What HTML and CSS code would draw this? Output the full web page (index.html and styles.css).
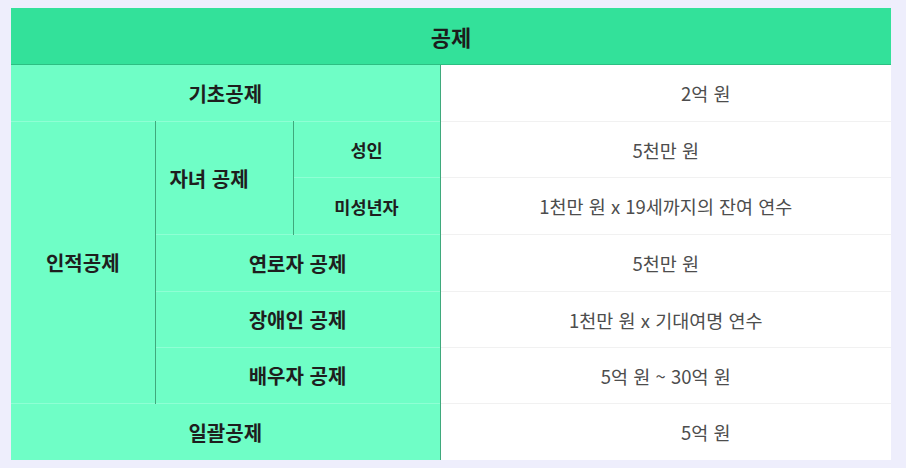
FILE: index.html
```html
<!DOCTYPE html>
<html lang="ko">
<head>
<meta charset="utf-8">
<link rel="stylesheet" href="styles.css">
</head>
<body>
<div class="wrap">
<table class="deduct">
  <colgroup>
    <col class="c1"><col class="c2"><col class="c3"><col class="c4">
  </colgroup>
  <thead>
    <tr class="r57"><th colspan="4" class="head">공제</th></tr>
  </thead>
  <tbody>
    <tr class="r57"><th colspan="3" class="label">기초공제</th><td class="val shift">2억 원</td></tr>
    <tr class="r56">
      <th rowspan="5" class="label vr">인적공제</th>
      <th rowspan="2" class="label vr child">자녀 공제</th>
      <th class="label sm">성인</th>
      <td class="val">5천만 원</td>
    </tr>
    <tr class="r57"><th class="label sm">미성년자</th><td class="val">1천만 원 x 19세까지의 잔여 연수</td></tr>
    <tr class="r57"><th colspan="2" class="label">연로자 공제</th><td class="val">5천만 원</td></tr>
    <tr class="r56"><th colspan="2" class="label">장애인 공제</th><td class="val">1천만 원 x 기대여명 연수</td></tr>
    <tr class="r56"><th colspan="2" class="label">배우자 공제</th><td class="val">5억 원 ~ 30억 원</td></tr>
    <tr class="r57"><th colspan="3" class="label">일괄공제</th><td class="val shift">5억 원</td></tr>
  </tbody>
</table>
</div>
</body>
</html>
```
FILE: styles.css
```css
html, body {
  margin: 0;
  padding: 0;
  background: #eeeefc;
}
body {
  font-family: "Noto Sans CJK KR", "Noto Sans", sans-serif;
}
.wrap {
  padding: 8px 15px 9px 11px;
}
.deduct {
  width: 880px;
  border-collapse: collapse;
  table-layout: fixed;
}
.c1 { width: 144px; }
.c2 { width: 138px; }
.c3 { width: 147px; }
.c4 { width: 451px; }
.r57 > th, .r57 > td { height: 56px; }
.r56 > th, .r56 > td { height: 55px; }
.head {
  background: #33e19a;
  color: #1c1c1c;
  font-size: 22px;
  font-weight: 700;
  border-bottom: 1px solid #2cbf82;
  padding: 0;
}
.label {
  background: #6ffec6;
  color: #1e1e1e;
  font-size: 20px;
  font-weight: 700;
  padding: 0;
  border-top: 1px solid #8effd4;
  border-right: 1px solid #3fa97c;
}
.label.sm { font-size: 17.5px; }
.label.child { padding-right: 30px; }
.val {
  background: #fff;
  color: #4d4d4d;
  font-size: 18.5px;
  text-align: center;
  padding: 0;
  border-top: 1px solid #f1f1f1;
}
.val.shift { padding-left: 80px; }
```
